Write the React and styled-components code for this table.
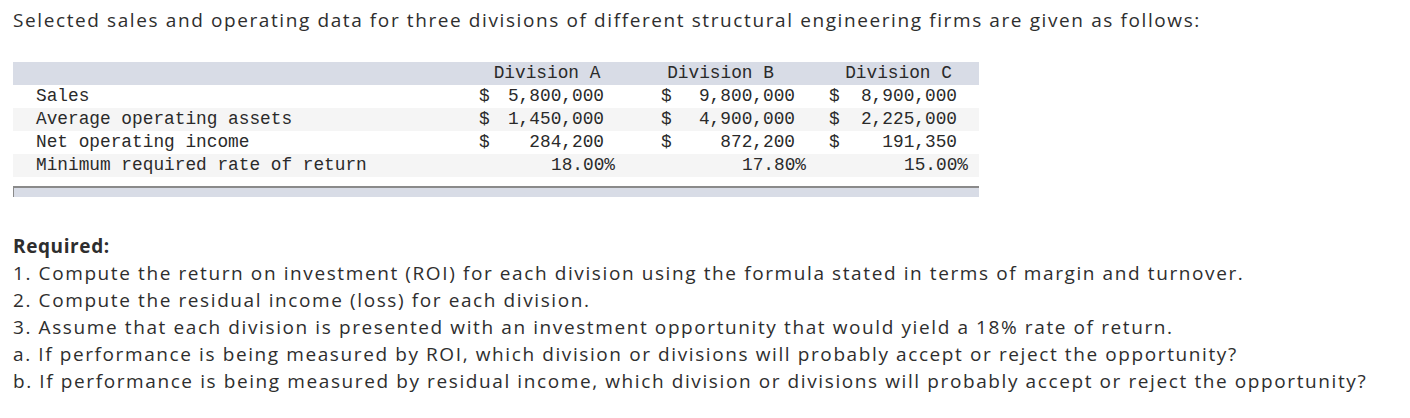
import React from 'react'
import styled, { createGlobalStyle } from 'styled-components';

const GlobalStyle = createGlobalStyle`
  body {
    margin: 0;
    background: #fff;
  }
`

const divisions = [
  { name: 'Division A', sales: '5,800,000', assets: '1,450,000', income: '284,200', rate: '18.00%', headPad: 0 },
  { name: 'Division B', sales: '9,800,000', assets: '4,900,000', income: '872,200', rate: '17.80%', headPad: 26 },
  { name: 'Division C', sales: '8,900,000', assets: '2,225,000', income: '191,350', rate: '15.00%', headPad: 0 },
]

const rows = [
  { label: 'Sales', key: 'sales', dollar: true },
  { label: 'Average operating assets', key: 'assets', dollar: true },
  { label: 'Net operating income', key: 'income', dollar: true },
  { label: 'Minimum required rate of return', key: 'rate', dollar: false },
]

export default function App() {
  return (
    <Page>
      <GlobalStyle />
      <Intro>
        Selected sales and operating data for three divisions of different structural engineering firms are given as follows:
      </Intro>

      <DataTable>
        <Row $shade="head">
          <Label />
          {divisions.map((d) => (
            <Head key={d.name} $pad={d.headPad}>{d.name}</Head>
          ))}
        </Row>
        {rows.map((r, i) => (
          <Row key={r.key} $shade={i % 2 ? 'alt' : 'plain'}>
            <Label>{r.label}</Label>
            {divisions.map((d, j) => (
              <React.Fragment key={d.name}>
                {j > 0 && <Spacer />}
                <Dollar>{r.dollar ? '$' : ''}</Dollar>
                <Amount $pct={!r.dollar}>{d[r.key]}</Amount>
              </React.Fragment>
            ))}
          </Row>
        ))}
      </DataTable>
      <ScrollBar />

      <Required>
        <Heading>Required:</Heading>
        <Line>1. Compute the return on investment (ROI) for each division using the formula stated in terms of margin and turnover.</Line>
        <Line>2. Compute the residual income (loss) for each division.</Line>
        <Line>3. Assume that each division is presented with an investment opportunity that would yield a 18% rate of return.</Line>
        <Line>a. If performance is being measured by ROI, which division or divisions will probably accept or reject the opportunity?</Line>
        <Line>b. If performance is being measured by residual income, which division or divisions will probably accept or reject the opportunity?</Line>
      </Required>
    </Page>
  )
}

const Page = styled.div`
  padding: 7px 13px 0 13px;
  font-family: "Open Sans", Lato, sans-serif;
  color: #2e2e2e;
`

const Intro = styled.p`
  margin: 0;
  font-size: 19px;
  letter-spacing: 1.6px;
  line-height: 27px;
  white-space: nowrap;
`

const DataTable = styled.div`
  width: 966px;
  margin-top: 28px;
  font-family: "Liberation Mono", "DejaVu Sans Mono", monospace;
  font-size: 17.8px;
  color: #2a2a2a;
`

const shades = {
  head: '#d8dce6',
  plain: '#ffffff',
  alt: '#f5f5f5',
}

const Row = styled.div`
  display: grid;
  grid-template-columns: 466px 11px 125px 46px 11px 134px 23px 11px 128px 11px;
  height: 23px;
  line-height: 23px;
  background: ${(p) => shades[p.$shade]};
  white-space: pre;
`

const Label = styled.div`
  padding-left: 23px;
`

const Head = styled.div`
  grid-column: span 2;
  text-align: center;
  padding-right: ${(p) => p.$pad}px;

  & + & {
    grid-column: span 3;
    padding-left: 46px;
  }
  & + & + & {
    padding-left: 23px;
  }
`

const Spacer = styled.div``

const Dollar = styled.div``

const Amount = styled.div`
  text-align: right;
  padding-right: ${(p) => (p.$pct ? 0 : 11)}px;
`

const ScrollBar = styled.div`
  width: 965px;
  height: 9px;
  margin-top: 9px;
  background: #d8dce6;
  border-top: 2px solid #8a8a8a;
  border-left: 1px solid #8a8a8a;
`

const Required = styled.div`
  margin-top: 36px;
  font-size: 19px;
  letter-spacing: 1.6px;
  line-height: 27px;
  white-space: nowrap;
`

const Heading = styled.div`
  font-weight: bold;
  letter-spacing: 0.6px;
`

const Line = styled.div``
